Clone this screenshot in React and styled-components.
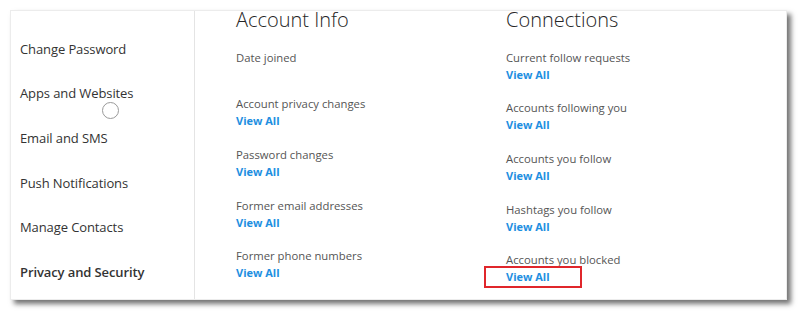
import React from 'react';
import styled, { createGlobalStyle } from 'styled-components';

const GlobalStyle = createGlobalStyle`
	html, body {
		margin: 0;
		padding: 0;
		background: #ffffff;
	}
	body {
		font-family: 'Open Sans', 'Noto Sans', sans-serif;
		-webkit-font-smoothing: antialiased;
	}
`;

const Page = styled.div`
	width: 800px;
	height: 311px;
	padding: 10px 13px 0 10px;
	box-sizing: border-box;
	overflow: hidden;
`;

const Card = styled.div`
	display: flex;
	height: 288px;
	background: #fff;
	border: 1px solid #ececec;
	box-shadow: 4px 4px 5px rgba(0, 0, 0, 0.55);
	overflow: hidden;
`;

const Sidebar = styled.nav`
	position: relative;
	width: 183px;
	flex-shrink: 0;
	border-right: 1px solid #e4e4e4;
	overflow: hidden;
`;

const NavList = styled.ul`
	list-style: none;
	margin: -29px 0 0;
	padding: 0;
`;

const NavItem = styled.li`
	height: 44.6px;
	display: flex;
	align-items: center;
	padding-left: 9px;
	font-size: 13px;
	color: ${(p) => (p.$faded ? '#dcdcdc' : '#333')};
	font-weight: ${(p) => (p.$active ? 600 : 400)};
	letter-spacing: -0.1px;
`;

const Spinner = styled.span`
	position: absolute;
	left: 91px;
	top: 91px;
	width: 15px;
	height: 15px;
	border: 1px solid #9a9a9a;
	border-radius: 50%;
`;

const Main = styled.div`
	flex: 1;
	display: flex;
	padding-left: 41px;
`;

const Column = styled.section`
	width: 270px;
	flex-shrink: 0;
	display: flex;
	flex-direction: column;
	align-items: flex-start;
`;

const Heading = styled.h2`
	margin: 0 0 19.5px;
	font-size: 20px;
	font-weight: 300;
	line-height: 18px;
	color: #262626;
`;

const Item = styled.div`
	display: flex;
	flex-direction: column;
	align-items: flex-start;
	margin-bottom: 16.7px;
`;

const Label = styled.div`
	font-size: 11.3px;
	line-height: 17px;
	color: #555;
`;

const Link = styled.a`
	position: relative;
	display: block;
	font-size: 11px;
	line-height: 17px;
	font-weight: 700;
	color: #1e8fe1;
	text-decoration: none;
`;

const Empty = styled.div`
	height: 13px;
`;

const Highlight = styled.span`
	position: absolute;
	left: -22px;
	top: -2.5px;
	width: 94px;
	height: 18px;
	border: 2px solid #e0262b;
`;

const navItems = [
	'Edit Profile',
	'Change Password',
	'Apps and Websites',
	'Email and SMS',
	'Push Notifications',
	'Manage Contacts',
	'Privacy and Security',
];

const accountInfo = ['Account privacy changes', 'Password changes', 'Former email addresses', 'Former phone numbers', 'Former bio texts'];

const connections = ['Current follow requests', 'Accounts following you', 'Accounts you follow', 'Hashtags you follow', 'Accounts you blocked'];

const App = () => {
	return (
		<Page>
			<GlobalStyle />
			<Card>
				<Sidebar>
					<NavList>
						{navItems.map((item, i) => (
							<NavItem key={item} $faded={i === 0} $active={item === 'Privacy and Security'}>
								{item}
							</NavItem>
						))}
					</NavList>
					<Spinner />
				</Sidebar>
				<Main>
					<Column>
						<Heading>Account Info</Heading>
						<Item>
							<Label>Date joined</Label>
							<Empty />
						</Item>
						{accountInfo.map((label) => (
							<Item key={label}>
								<Label>{label}</Label>
								<Link href="#">View All</Link>
							</Item>
						))}
					</Column>
					<Column>
						<Heading>Connections</Heading>
						{connections.map((label, i) => (
							<Item key={label}>
								<Label>{label}</Label>
								<Link href="#">
									View All
									{i === connections.length - 1 && <Highlight />}
								</Link>
							</Item>
						))}
					</Column>
				</Main>
			</Card>
		</Page>
	);
};

export default App;
